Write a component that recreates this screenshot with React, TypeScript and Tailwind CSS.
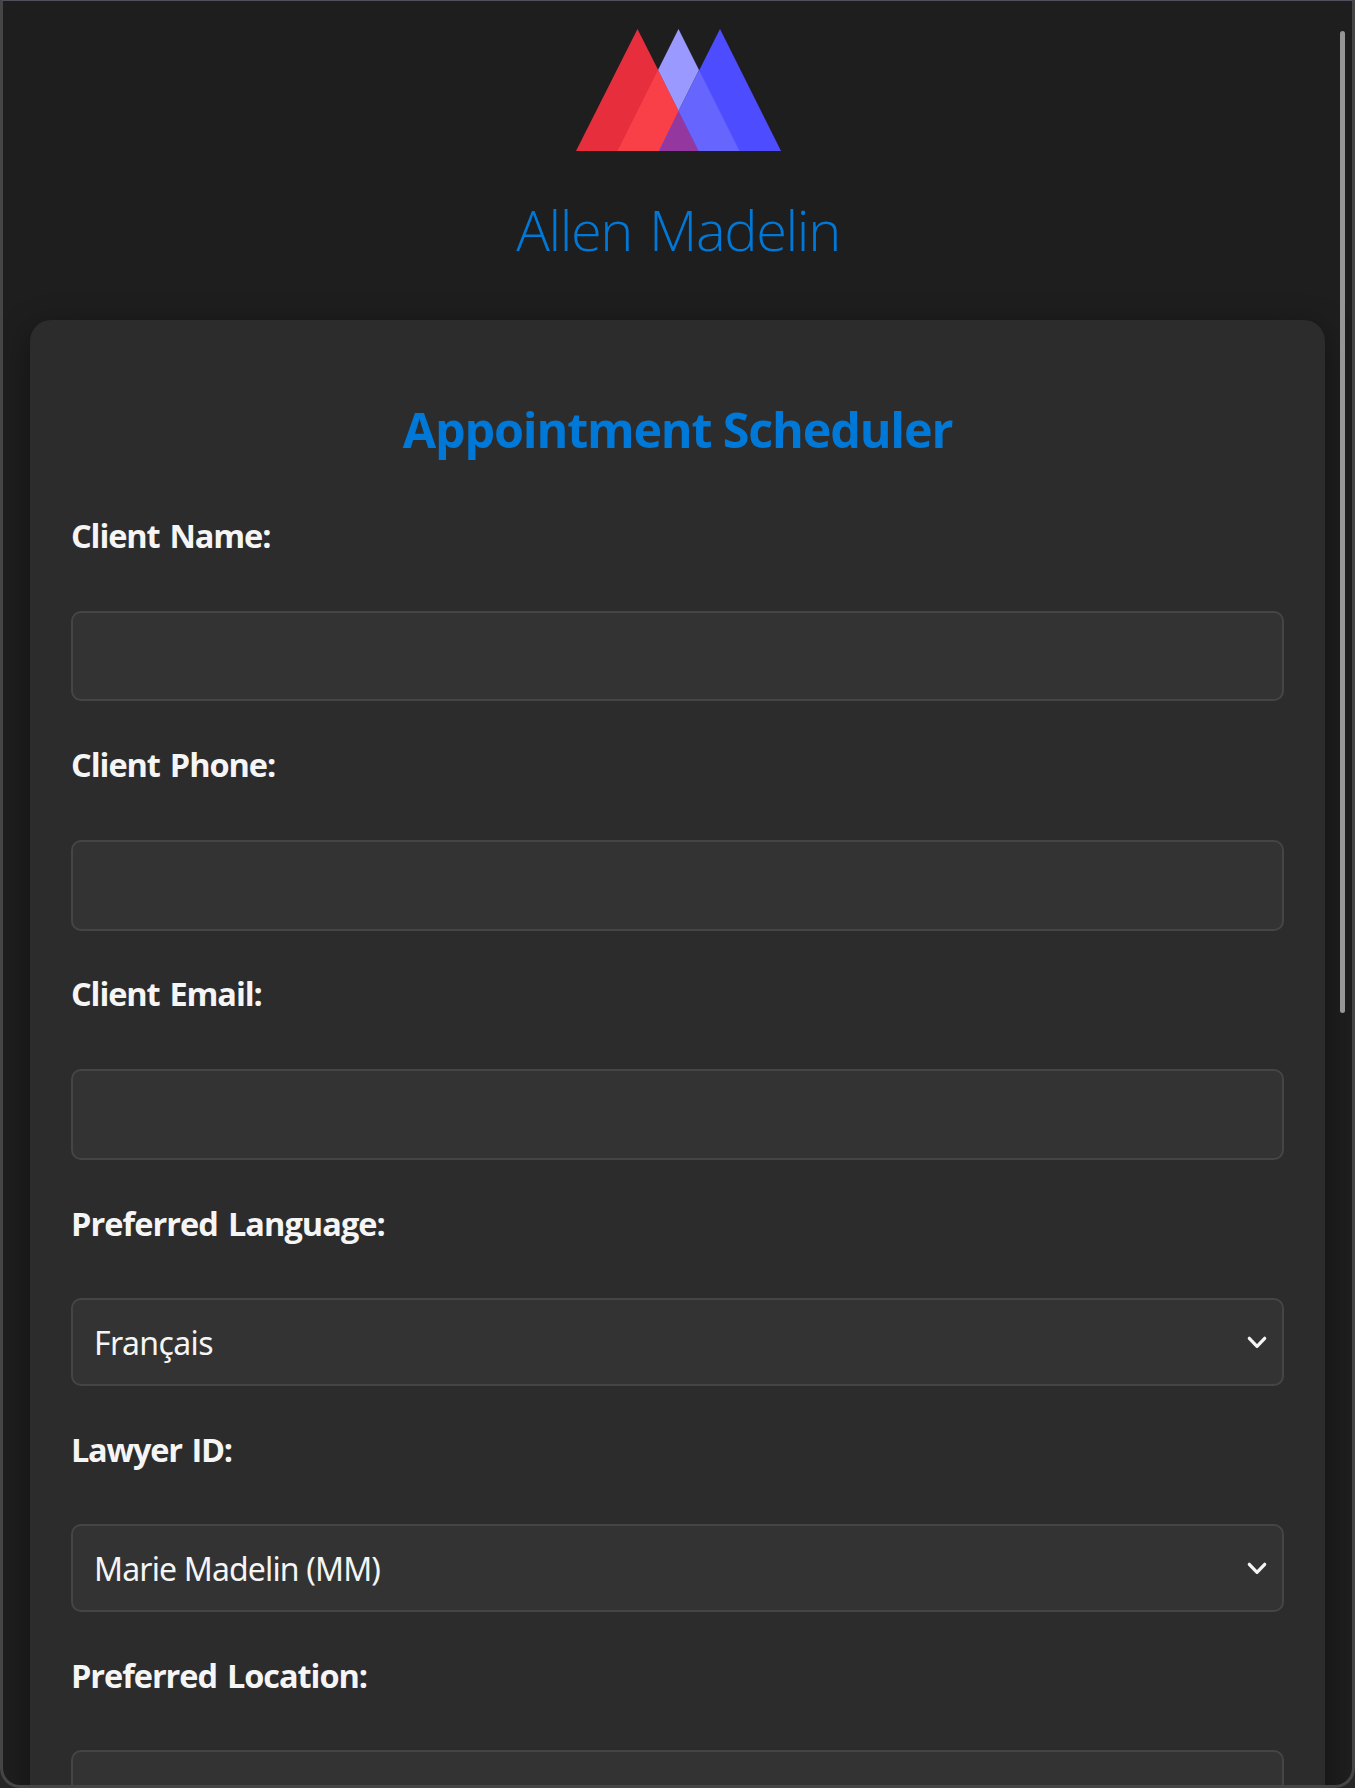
import type { ReactNode } from "react";

function Logo() {
  return (
    <svg width="206" height="122" viewBox="0 0 206 122" className="block">
      <polygon points="61.5,0 0,122 123,122" fill="#e62e3d" />
      <polygon points="144,0 82.5,122 205,122" fill="#4d4dff" />
      <polygon points="102.5,0 82,41 102.5,82 123,41" fill="#9999ff" />
      <polygon points="82,41 41.5,122 83,122 102.5,82" fill="#f93f48" />
      <polygon points="123,41 102.5,82 122.5,122 163.5,122" fill="#6666ff" />
      <polygon points="102.5,82 83.5,122 122.5,122" fill="#9438a0" />
    </svg>
  );
}

function Chevron() {
  return (
    <svg width="20" height="14" viewBox="0 0 20 14" fill="none" className="mt-0.5 block">
      <path d="M2.3 2.3 L10 10.4 L17.7 2.3" stroke="#f5f5f5" strokeWidth="3.2" strokeLinecap="round" strokeLinejoin="round" />
    </svg>
  );
}

function Label({ children, className }: { children: ReactNode; className: string }) {
  return (
    <div className={"h-10 whitespace-nowrap text-[32.5px] leading-10 font-bold [word-spacing:2.5px] text-[#f5f5f5] " + className}>
      {children}
    </div>
  );
}

const box = "w-full rounded-[10px] border-2 border-[#454545] bg-[#333333]";

function Select({ children, className }: { children: ReactNode; className: string }) {
  return (
    <div className={"mb-11 flex h-[88px] items-center justify-between pr-[15px] pl-[21px] " + box}>
      <span className={"pt-0.5 font-['Noto_Sans',sans-serif] text-[32px] leading-10 whitespace-nowrap text-[#f5f5f5] " + className}>
        {children}
      </span>
      <Chevron />
    </div>
  );
}

export default function App() {
  return (
    <div className="relative h-[1788px] w-[1355px] overflow-hidden bg-[#262626] font-['Open_Sans',sans-serif]">
      <div className="flex h-full flex-col items-center overflow-hidden rounded-b-[20px] bg-[#1e1e1e] pt-[29px]">
        <div className="ml-0.5 shrink-0">
          <Logo />
        </div>
        <h1 className="mt-[40px] mb-[53px] h-[76px] shrink-0 pl-px text-[56px] leading-[76px] font-light tracking-[-1.4px] whitespace-nowrap [word-spacing:4px] text-[#0078d7]">
          Allen Madelin
        </h1>
        <main className="h-[1500px] w-[1295px] shrink-0 rounded-[21px] bg-[#2c2c2c] px-[41px] pt-[77px] shadow-[0_8px_32px_rgba(0,0,0,0.4)]">
          <h2 className="mb-[55px] h-16 text-center text-[48.5px] leading-[64px] font-bold tracking-[-1.2px] whitespace-nowrap text-[#0078d7]">
            Appointment Scheduler
          </h2>
          <Label className="mb-[55px] tracking-[-1.1px]">Client Name:</Label>
          <div className={"mb-11 h-[90px] " + box} />
          <Label className="mb-[55px] tracking-[-1.05px]">Client Phone:</Label>
          <div className={"mb-[43px] h-[91px] " + box} />
          <Label className="mb-[55px] tracking-[-1.1px]">Client Email:</Label>
          <div className={"mb-11 h-[91px] " + box} />
          <Label className="mb-[54px] tracking-[-0.95px]">Preferred Language:</Label>
          <Select className="tracking-[-0.6px]">Français</Select>
          <Label className="mb-[54px] tracking-[-1.25px]">Lawyer ID:</Label>
          <Select className="tracking-[-0.85px]">Marie Madelin (MM)</Select>
          <Label className="mb-[54px] tracking-[-1.05px]">Preferred Location:</Label>
          <div className={"h-[91px] " + box} />
        </main>
      </div>
      <div className="absolute top-[31px] right-[10px] h-[982px] w-[5px] rounded-full bg-[#969696]" />
      <div className="pointer-events-none absolute inset-0 rounded-b-[20px] border-x-3 border-t border-b-3 border-[#454545] border-t-[#50505c]" />
    </div>
  );
}
